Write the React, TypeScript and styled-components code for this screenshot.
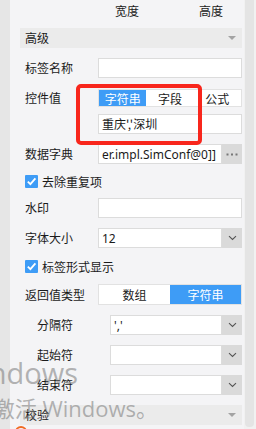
import styled, { createGlobalStyle } from "styled-components";

const Global = createGlobalStyle`
  html, body { margin: 0; padding: 0; overflow: hidden; }
  body { font-family: "Noto Sans CJK SC", "Noto Sans", sans-serif; font-size: 12px; color: #1b1b1b; }
  * { box-sizing: border-box; }
`;

const Frame = styled.div`
  position: relative;
  display: flex;
  width: 256px;
  height: 429px;
  overflow: hidden;
  background: #e6e6e6;
`;

const Gutter = styled.div`
  width: 10px;
  flex: none;
  background: #e6e6e6;
`;

const Panel = styled.div`
  flex: 1;
  display: flex;
  flex-direction: column;
  gap: 10px;
  padding: 0 2px 0 10px;
  background: #f4f4f6;
`;

const Scroll = styled.div`
  width: 12px;
  flex: none;
  background: #f1f1f1;
`;

const Thumb = styled.div`
  width: 9px;
  height: 427px;
  margin-left: 1px;
  background: #e4e4e4;
  border-radius: 0 0 4px 4px;
`;

const Header = styled.div`
  display: flex;
  gap: 60px;
  height: 18px;
  padding: 3px 0 0 95px;
  line-height: 16px;
`;

const Section = styled.div`
  display: flex;
  align-items: center;
  justify-content: space-between;
  flex: none;
  height: 20px;
  padding: 0 6px 0 5px;
  background: #ebebeb;
  line-height: 20px;
`;

const Caret = styled.span`
  width: 0;
  height: 0;
  border-left: 4px solid transparent;
  border-right: 4px solid transparent;
  border-top: 4px solid #a3a3a3;
`;

const Row = styled.div<{ $h?: number; $tight?: boolean }>`
  display: flex;
  align-items: center;
  flex: none;
  height: ${(p) => p.$h ?? 20}px;
  margin-top: ${(p) => (p.$tight ? -4 : 0)}px;
`;

const Label = styled.div<{ $indent?: boolean }>`
  flex: none;
  width: ${(p) => (p.$indent ? 90 : 78)}px;
  padding-left: ${(p) => (p.$indent ? 17 : 5)}px;
  line-height: 16px;
`;

const Field = styled.div`
  flex: 1;
  min-width: 0;
  height: 20px;
  padding: 0 3px;
  background: #fff;
  border: 1px solid #dcdcdc;
  line-height: 18px;
  white-space: nowrap;
  overflow: hidden;
`;

const Latin = styled.span`
  font-family: "Noto Sans", "Noto Sans CJK SC", sans-serif;
  font-size: 12px;
`;

const Combo = styled.div`
  flex: 1;
  display: flex;
  min-width: 0;
  height: 20px;
`;

const SideBtn = styled.div`
  display: flex;
  align-items: center;
  justify-content: center;
  width: 20px;
  flex: none;
  background: #dadada;
`;

const Segmented = styled.div<{ $h: number }>`
  flex: 1;
  display: flex;
  height: ${(p) => p.$h}px;
  background: #fff;
  border: 1px solid #e2e2e2;
`;

const Seg = styled.div<{ $on?: boolean }>`
  flex: 1;
  display: flex;
  align-items: center;
  justify-content: center;
  background: ${(p) => (p.$on ? "#3e9cf6" : "#fff")};
  color: ${(p) => (p.$on ? "#fff" : "#1b1b1b")};
`;

const Check = styled.span`
  display: flex;
  align-items: center;
  justify-content: center;
  width: 13px;
  height: 13px;
  margin: 0 4px 0 5px;
  background: #3e9cf6;
  border-radius: 1px;
`;

const Annotation = styled.div`
  position: absolute;
  left: 76px;
  top: 84px;
  width: 126px;
  height: 61px;
  border: 4px solid #f8261c;
  border-radius: 5px;
`;

const Watermark = styled.div<{ $top: number; $right: number; $size: number }>`
  position: absolute;
  top: ${(p) => p.$top}px;
  right: ${(p) => p.$right}px;
  font-family: "Open Sans", "Noto Sans CJK SC", sans-serif;
  font-size: ${(p) => p.$size}px;
  line-height: 1;
  white-space: nowrap;
  color: rgba(110, 110, 110, 0.5);
  pointer-events: none;
`;

const Blob = styled.div`
  position: absolute;
  left: 15px;
  top: 426px;
  width: 12px;
  height: 12px;
  border-radius: 50%;
  border: 2px solid #f06a22;
`;

const Chevron = () => (
  <svg width="9" height="6" viewBox="0 0 9 6">
    <path d="M1 1.2 L4.5 4.5 L8 1.2" fill="none" stroke="#555" strokeWidth="1.1" />
  </svg>
);

const Dots = () => (
  <svg width="12" height="3" viewBox="0 0 12 3">
    <rect x="0.5" y="0.5" width="2" height="2" fill="#777" />
    <rect x="5" y="0.5" width="2" height="2" fill="#777" />
    <rect x="9.5" y="0.5" width="2" height="2" fill="#777" />
  </svg>
);

const Tick = () => (
  <svg width="11" height="11" viewBox="0 0 11 11">
    <path d="M1.8 5.6 L4.4 8.2 L9.4 2.4" fill="none" stroke="#fff" strokeWidth="1.8" />
  </svg>
);

const Select = ({ value }: { value?: string }) => (
  <Combo>
    <Field>
      <Latin>{value}</Latin>
    </Field>
    <SideBtn>
      <Chevron />
    </SideBtn>
  </Combo>
);

export default function App() {
  return (
    <Frame>
      <Global />
      <Gutter />
      <Panel>
        <Header>
          <span>宽度</span>
          <span>高度</span>
        </Header>
        <Section>
          <span>高级</span>
          <Caret />
        </Section>
        <Row>
          <Label>标签名称</Label>
          <Field />
        </Row>
        <Row>
          <Label>控件值</Label>
          <Segmented $h={18}>
            <Seg $on>字符串</Seg>
            <Seg>字段</Seg>
            <Seg>公式</Seg>
          </Segmented>
        </Row>
        <Row $tight>
          <Label />
          <Field>重庆','深圳</Field>
        </Row>
        <Row>
          <Label>数据字典</Label>
          <Combo>
            <Field>
              <Latin>er.impl.SimConf@0]]</Latin>
            </Field>
            <SideBtn>
              <Dots />
            </SideBtn>
          </Combo>
        </Row>
        <Row $h={14}>
          <Check>
            <Tick />
          </Check>
          去除重复项
        </Row>
        <Row>
          <Label>水印</Label>
          <Field />
        </Row>
        <Row>
          <Label>字体大小</Label>
          <Select value="12" />
        </Row>
        <Row $h={16}>
          <Check>
            <Tick />
          </Check>
          标签形式显示
        </Row>
        <Row $h={21}>
          <Label>返回值类型</Label>
          <Segmented $h={21}>
            <Seg>数组</Seg>
            <Seg $on>字符串</Seg>
          </Segmented>
        </Row>
        <Row>
          <Label $indent>分隔符</Label>
          <Select value="','" />
        </Row>
        <Row>
          <Label $indent>起始符</Label>
          <Select />
        </Row>
        <Row>
          <Label $indent>结束符</Label>
          <Select />
        </Row>
        <Section>
          <span>校验</span>
          <Caret />
        </Section>
      </Panel>
      <Scroll>
        <Thumb />
      </Scroll>
      <Annotation />
      <Watermark $top={358} $right={178} $size={29}>
        激活 Windows
      </Watermark>
      <Watermark $top={397} $right={98} $size={22}>
        转到“设置”以激活 Windows。
      </Watermark>
      <Blob />
    </Frame>
  );
}
